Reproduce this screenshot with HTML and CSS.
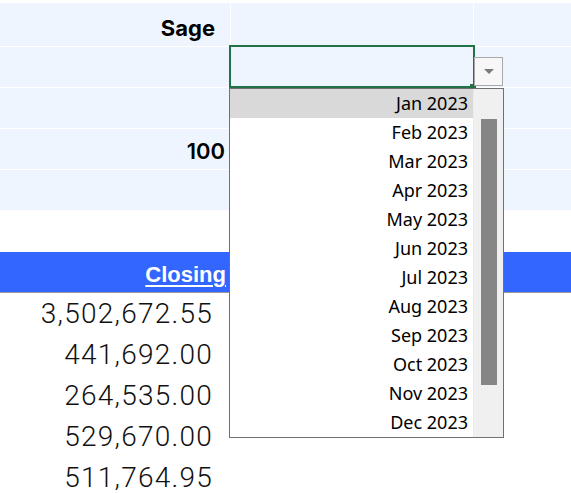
FILE: index.html
```
<!DOCTYPE html>
<html lang="en">
<head>
  <meta charset="UTF-8" />
  <title>Sheet - Period picker</title>
  <link rel="stylesheet" href="styles.css">
</head>
<body>
  <div class="sheet">
    <div class="params">
      <div class="cell label">Sage</div>
      <div class="cell"></div>
      <div class="cell"></div>

      <div class="cell"></div>
      <div class="cell"></div>
      <div class="cell"></div>

      <div class="cell"></div>
      <div class="cell"></div>
      <div class="cell"></div>

      <div class="cell value">100</div>
      <div class="cell"></div>
      <div class="cell"></div>

      <div class="cell"></div>
      <div class="cell"></div>
      <div class="cell"></div>
    </div>

    <div class="blank-row"></div>

    <div class="head-row">
      <div class="head-cell"><a class="head-link">Closing</a></div>
    </div>

    <div class="amounts">
      <div class="amount">3,502,672.55</div>
      <div class="amount">441,692.00</div>
      <div class="amount">264,535.00</div>
      <div class="amount">529,670.00</div>
      <div class="amount">511,764.95</div>
    </div>

    <!-- active cell + validation dropdown -->
    <div class="active-cell"><span class="fill-handle"></span></div>
    <div class="drop-btn">
      <svg width="10" height="5" viewBox="0 0 10 5"><polygon points="0,0 10,0 5,5" fill="#7a7a7a"/></svg>
    </div>
    <div class="listbox">
      <ul class="options">
        <li class="selected">Jan 2023</li>
        <li>Feb 2023</li>
        <li>Mar 2023</li>
        <li>Apr 2023</li>
        <li>May 2023</li>
        <li>Jun 2023</li>
        <li>Jul 2023</li>
        <li>Aug 2023</li>
        <li>Sep 2023</li>
        <li>Oct 2023</li>
        <li>Nov 2023</li>
        <li>Dec 2023</li>
      </ul>
      <div class="scroll-track"><div class="scroll-thumb"></div></div>
    </div>
  </div>
</body>
</html>
```

FILE: styles.css
```
* {
  margin: 0;
  padding: 0;
  box-sizing: border-box;
}
body {
  background: #fff;
  font-family: 'Inter', 'Liberation Sans', sans-serif;
  color: #000;
  overflow: hidden;
}
.sheet {
  position: relative;
  padding-top: 3px;
  width: 571px;
  height: 493px;
}
.params {
  display: grid;
  grid-template-columns: 230px 242px 1fr;
  grid-template-rows: 43px repeat(4, 40px);
  gap: 1px;
  background: #fff;
}
.cell {
  background: #eef5fe;
}
.label {
  text-align: right;
  font-size: 22px;
  font-weight: 700;
  padding: 7px 15px 0 0;
  line-height: 36px;
}
.value {
  text-align: right;
  font-size: 22px;
  font-weight: 600;
  padding: 4px 5px 0 0;
  line-height: 36px;
}
.blank-row {
  height: 42px;
}
.head-row {
  height: 41px;
  background: #3366ff;
  border-bottom: 1px solid #9a9a9a;
}
.head-cell {
  width: 230px;
  text-align: right;
  padding: 6px 4px 0 0;
  line-height: 34px;
}
.head-link {
  color: #fff;
  font-family: 'Liberation Sans', sans-serif;
  font-size: 22px;
  font-weight: 700;
  text-decoration: underline;
  text-decoration-thickness: 1.5px;
  text-underline-offset: 3px;
}
.amount {
  width: 230px;
  height: 41px;
  line-height: 41px;
  text-align: right;
  padding-right: 17px;
  font-family: 'Roboto', sans-serif;
  font-weight: 300;
  font-size: 28px;
  letter-spacing: 1.25px;
  color: #111;
}
.active-cell {
  position: absolute;
  left: 229px;
  top: 45px;
  width: 246px;
  height: 43px;
  border: 2px solid #217346;
}
.fill-handle {
  position: absolute;
  right: -3px;
  bottom: -4px;
  width: 6px;
  height: 6px;
  background: #217346;
}
.drop-btn {
  position: absolute;
  left: 474px;
  top: 57px;
  width: 29px;
  height: 29px;
  background: #f7f7f7;
  border: 1px solid #a9a9a9;
  display: flex;
  align-items: center;
  justify-content: center;
}
.listbox {
  position: absolute;
  left: 229px;
  top: 88px;
  width: 275px;
  height: 350px;
  background: #fff;
  border: 1px solid #707070;
  display: flex;
}
.options {
  list-style: none;
  width: 243px;
  font-family: 'Noto Sans', sans-serif;
  font-size: 18px;
}
.options li {
  height: 29px;
  line-height: 29px;
  text-align: right;
  padding-right: 5px;
}
.options li.selected {
  background: #d9d9d9;
}
.scroll-track {
  flex: 1;
  background: #f0f0f0;
  border-left: 1px solid #e4ecf6;
  padding: 30px 6px 0 7px;
}
.scroll-thumb {
  height: 266px;
  background: #868686;
}
```
